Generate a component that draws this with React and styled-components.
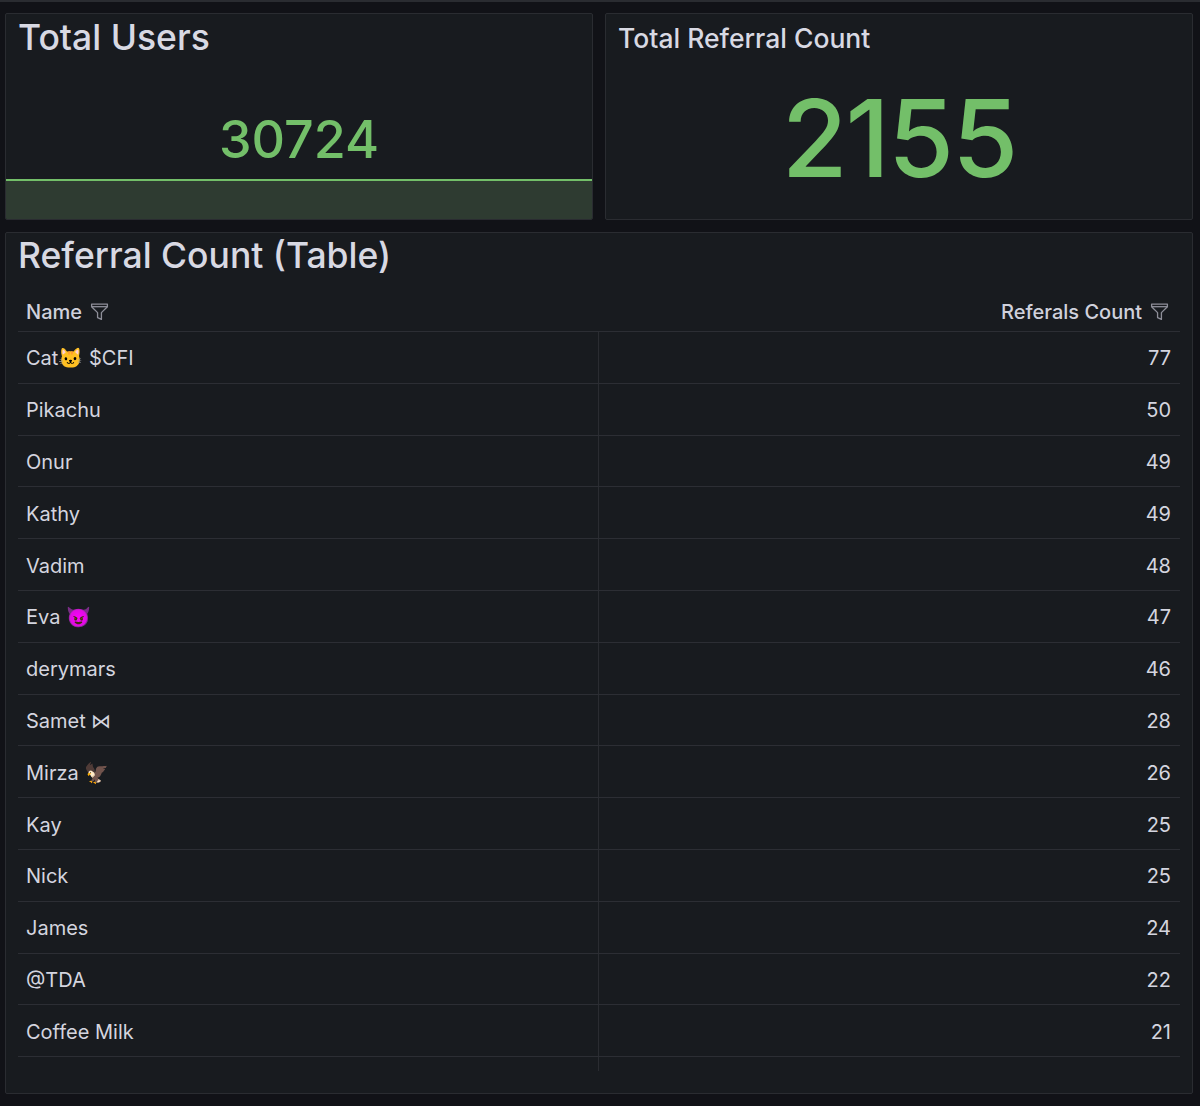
import React from "react";
import styled, { createGlobalStyle } from "styled-components";

const GlobalStyle = createGlobalStyle`
  html, body {
    margin: 0;
    padding: 0;
    background: #111217;
  }
  * {
    box-sizing: border-box;
  }
`;

const Page = styled.div`
  width: 1200px;
  height: 1106px;
  padding: 11px 7px 0 5px;
  border-top: 2px solid #2a2c31;
  display: grid;
  grid-template-columns: 588px 588px;
  grid-template-rows: 207px 862px;
  column-gap: 12px;
  row-gap: 12px;
  font-family: Inter, "Noto Sans", sans-serif;
  color: #ccccdc;
  overflow: hidden;
`;

const Panel = styled.section`
  background: #181b1f;
  border: 1px solid #2a2c31;
  border-radius: 2px;
  display: flex;
  flex-direction: column;
  overflow: hidden;
  grid-column: ${(p) => (p.$wide ? "1 / span 2" : "auto")};
`;

const Title = styled.h2`
  margin: 0;
  padding: ${(p) => p.$top}px 12px 0 12px;
  font-size: ${(p) => p.$size}px;
  line-height: ${(p) => p.$lh}px;
  font-weight: 500;
  color: #d8d9e3;
  white-space: nowrap;
`;

const ValueArea = styled.div`
  flex: 1;
  display: flex;
  justify-content: center;
  align-items: ${(p) => (p.$bottom ? "flex-end" : "center")};
  padding-bottom: ${(p) => p.$pb || 0}px;
  padding-top: ${(p) => p.$pt || 0}px;
`;

const BigValue = styled.div`
  font-size: ${(p) => p.$size}px;
  line-height: ${(p) => p.$size}px;
  font-weight: 500;
  color: #73bf69;
  letter-spacing: ${(p) => p.$ls || 0}px;
`;

const Spark = styled.div`
  height: 40px;
  background: #2e3b31;
  border-top: 2px solid #73bf69;
`;

const Table = styled.div`
  margin: 16px 12px 0 12px;
  font-size: 20px;
`;

const HeadRow = styled.div`
  display: grid;
  grid-template-columns: 1fr 1fr;
  height: 40px;
  border-bottom: 1px solid #2c2e34;
  font-weight: 500;
  color: #d0d1dc;
`;

const HeadCell = styled.div`
  display: flex;
  align-items: center;
  justify-content: ${(p) => (p.$right ? "flex-end" : "flex-start")};
  gap: 7px;
  padding: 0 10px 0 8px;
`;

const Body = styled.div`
  padding-bottom: 14px;
  background-image: linear-gradient(
    to right,
    transparent calc(50% - 1px),
    #2a2c31 calc(50% - 1px),
    #2a2c31 50%,
    transparent 50%
  );
`;

const Row = styled.div`
  display: grid;
  grid-template-columns: 1fr 1fr;
  height: 51.8px;
  padding-top: 2px;
  border-bottom: 1px solid #2c2e34;
`;

const Cell = styled.div`
  display: flex;
  align-items: center;
  justify-content: ${(p) => (p.$right ? "flex-end" : "flex-start")};
  padding: 0 9px 0 8px;
  color: #d4d5df;
  white-space: nowrap;
`;

const FilterIcon = () => (
  <svg width="21" height="21" viewBox="0 0 24 24" fill="none" stroke="#8e8f99" strokeWidth="1.5" strokeLinejoin="round">
    <path d="M3 3.5h18v3l-6.8 6.8v7.7l-4.4-1.9v-5.8L3 6.5z" />
    <path d="M3 6.5h18" />
  </svg>
);

const rows = [
  ["Cat\u{1F431} $CFI", 77],
  ["Pikachu", 50],
  ["Onur", 49],
  ["Kathy", 49],
  ["Vadim", 48],
  ["Eva \u{1F608}", 47],
  ["derymars", 46],
  ["Samet \u22C8", 28],
  ["Mirza \u{1F985}", 26],
  ["Kay", 25],
  ["Nick", 25],
  ["James", 24],
  ["@TDA", 22],
  ["Coffee Milk", 21],
];

export default function App() {
  return (
    <>
      <GlobalStyle />
      <Page>
        <Panel>
          <Title $top={4} $size={35.5} $lh={40}>
            Total Users
          </Title>
          <ValueArea $bottom $pb={13}>
            <BigValue $size={52}>30724</BigValue>
          </ValueArea>
          <Spark />
        </Panel>
        <Panel>
          <Title $top={8} $size={26.5} $lh={32}>
            Total Referral Count
          </Title>
          <ValueArea $pt={4}>
            <BigValue $size={107} $ls={-2}>2155</BigValue>
          </ValueArea>
        </Panel>
        <Panel $wide>
          <Title $top={3} $size={35.5} $lh={40}>
            Referral Count (Table)
          </Title>
          <Table>
            <HeadRow>
              <HeadCell>
                Name <FilterIcon />
              </HeadCell>
              <HeadCell $right>
                Referals Count <FilterIcon />
              </HeadCell>
            </HeadRow>
            <Body>
              {rows.map(([name, count]) => (
                <Row key={name}>
                  <Cell>{name}</Cell>
                  <Cell $right>{count}</Cell>
                </Row>
              ))}
            </Body>
          </Table>
        </Panel>
      </Page>
    </>
  );
}
